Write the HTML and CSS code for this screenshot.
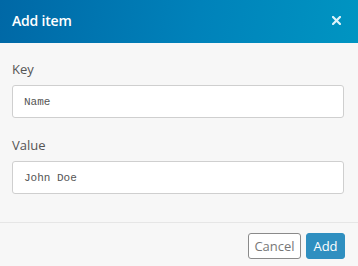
FILE: index.html
```html
<!DOCTYPE html>
<html>
<head>
<meta charset="utf-8">
<link rel="stylesheet" href="styles.css">
</head>
<body>
<div class="dialog">
  <div class="header">
    <span class="title">Add item</span>
    <svg class="close" width="9" height="9" viewBox="0 0 9 9"><path d="M1 1 L8 8 M8 1 L1 8" stroke="#dff3fa" stroke-width="2.2" stroke-linecap="square"/></svg>
  </div>
  <div class="body">
    <label class="label">Key</label>
    <div class="input">Name</div>
    <label class="label value-label">Value</label>
    <div class="input">John Doe</div>
  </div>
  <div class="footer">
    <button class="btn cancel">Cancel</button>
    <button class="btn add">Add</button>
  </div>
</div>
</body>
</html>
```
FILE: styles.css
```css
html, body {
  margin: 0;
  padding: 0;
  background: #f7f7f7;
  font-family: "Open Sans", "Noto Sans", sans-serif;
}
.dialog {
  width: 358px;
  height: 266px;
  display: flex;
  flex-direction: column;
  background: #f7f7f7;
}
.header {
  height: 43px;
  background: linear-gradient(100deg, #0068a6 0%, #0082ba 55%, #0095c2 100%);
  display: flex;
  align-items: center;
  justify-content: space-between;
  padding: 0 17px 2px 12px;
  box-sizing: border-box;
}
.title {
  color: #fff;
  font-size: 14px;
  font-weight: 600;
  letter-spacing: -0.2px;
}
.close {
  display: block;
}
.body {
  padding: 16px 14px 0 12px;
  display: flex;
  flex-direction: column;
  height: 180px;
  box-sizing: border-box;
  border-bottom: 1px solid #e6e6e6;
}
.label {
  font-size: 13px;
  color: #555;
  height: 20px;
  line-height: 20px;
  margin-bottom: 6px;
}
.value-label {
  margin-top: 17px;
}
.input {
  height: 33px;
  flex: none;
  box-sizing: border-box;
  background: #fff;
  border: 1px solid #cfcfcf;
  border-radius: 3px;
  font-family: "Liberation Mono", monospace;
  font-size: 11px;
  color: #555;
  padding: 0 11px;
  display: flex;
  align-items: center;
}
.footer {
  display: flex;
  justify-content: flex-end;
  gap: 5px;
  padding: 10px 13px 0 0;
}
.btn {
  height: 26px;
  box-sizing: border-box;
  border-radius: 3px;
  font-family: "Open Sans", "Noto Sans", sans-serif;
  font-size: 13px;
  padding: 0;
  line-height: 24px;
}
.cancel {
  background: #fff;
  border: 1px solid #8a8a8a;
  color: #777;
  width: 53px;
}
.add {
  background: #2f8fc0;
  border: 1px solid #2f8fc0;
  color: #fff;
  width: 39px;
}
```
